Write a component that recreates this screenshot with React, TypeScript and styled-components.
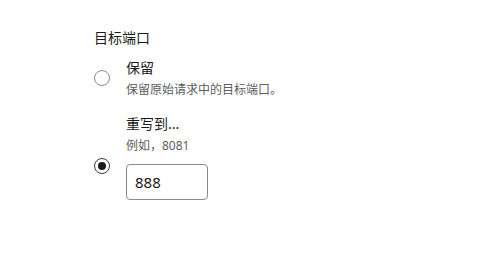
import React from "react";
import styled, { createGlobalStyle } from "styled-components";

const Global = createGlobalStyle`
  html, body { margin: 0; padding: 0; background: #ffffff; }
  body { font-family: "Noto Sans", "Noto Sans CJK SC", sans-serif; color: #1b1b1b; }
`;

const Panel = styled.div`
  width: 479px;
  height: 255px;
  box-sizing: border-box;
  padding: 28px 0 0 94px;
  display: flex;
  flex-direction: column;
`;

const Title = styled.div`
  font-size: 14px;
  line-height: 20px;
  color: #1b1b1b;
  margin-bottom: 10px;
`;

const Option = styled.label`
  display: flex;
  align-items: center;
  gap: 16px;
  margin-bottom: 16px;
`;

const Radio = styled.span<{ $checked?: boolean }>`
  width: 16px;
  height: 16px;
  box-sizing: border-box;
  border-radius: 50%;
  border: 1px solid ${(p) => (p.$checked ? "#3a3a3a" : "#8a8a8a")};
  display: flex;
  align-items: center;
  justify-content: center;
  flex: none;
  background: #fff;
  &::after {
    content: "";
    display: ${(p) => (p.$checked ? "block" : "none")};
    width: 8px;
    height: 8px;
    border-radius: 50%;
    background: #1b1b1b;
  }
`;

const Body = styled.div`
  display: flex;
  flex-direction: column;
`;

const Label = styled.div`
  font-size: 14px;
  line-height: 20px;
  color: #1b1b1b;
`;

const Desc = styled.div`
  font-size: 12px;
  line-height: 16px;
  color: #5c5c5c;
  margin-top: 4px;
`;

const Input = styled.div`
  margin-top: 10px;
  margin-bottom: 17px;
  width: 82px;
  height: 36px;
  box-sizing: border-box;
  border: 1px solid #8a8a8a;
  border-radius: 4px;
  padding: 0 0 0 8px;
  display: flex;
  align-items: center;
  font-size: 15px;
  color: #1b1b1b;
`;

export default function App() {
  return (
    <>
      <Global />
      <Panel>
        <Title>目标端口</Title>
        <Option>
          <Radio />
          <Body>
            <Label>保留</Label>
            <Desc>保留原始请求中的目标端口。</Desc>
          </Body>
        </Option>
        <Option>
          <Radio $checked />
          <Body>
            <Label>重写到...</Label>
            <Desc>例如，8081</Desc>
            <Input>888</Input>
          </Body>
        </Option>
      </Panel>
    </>
  );
}
